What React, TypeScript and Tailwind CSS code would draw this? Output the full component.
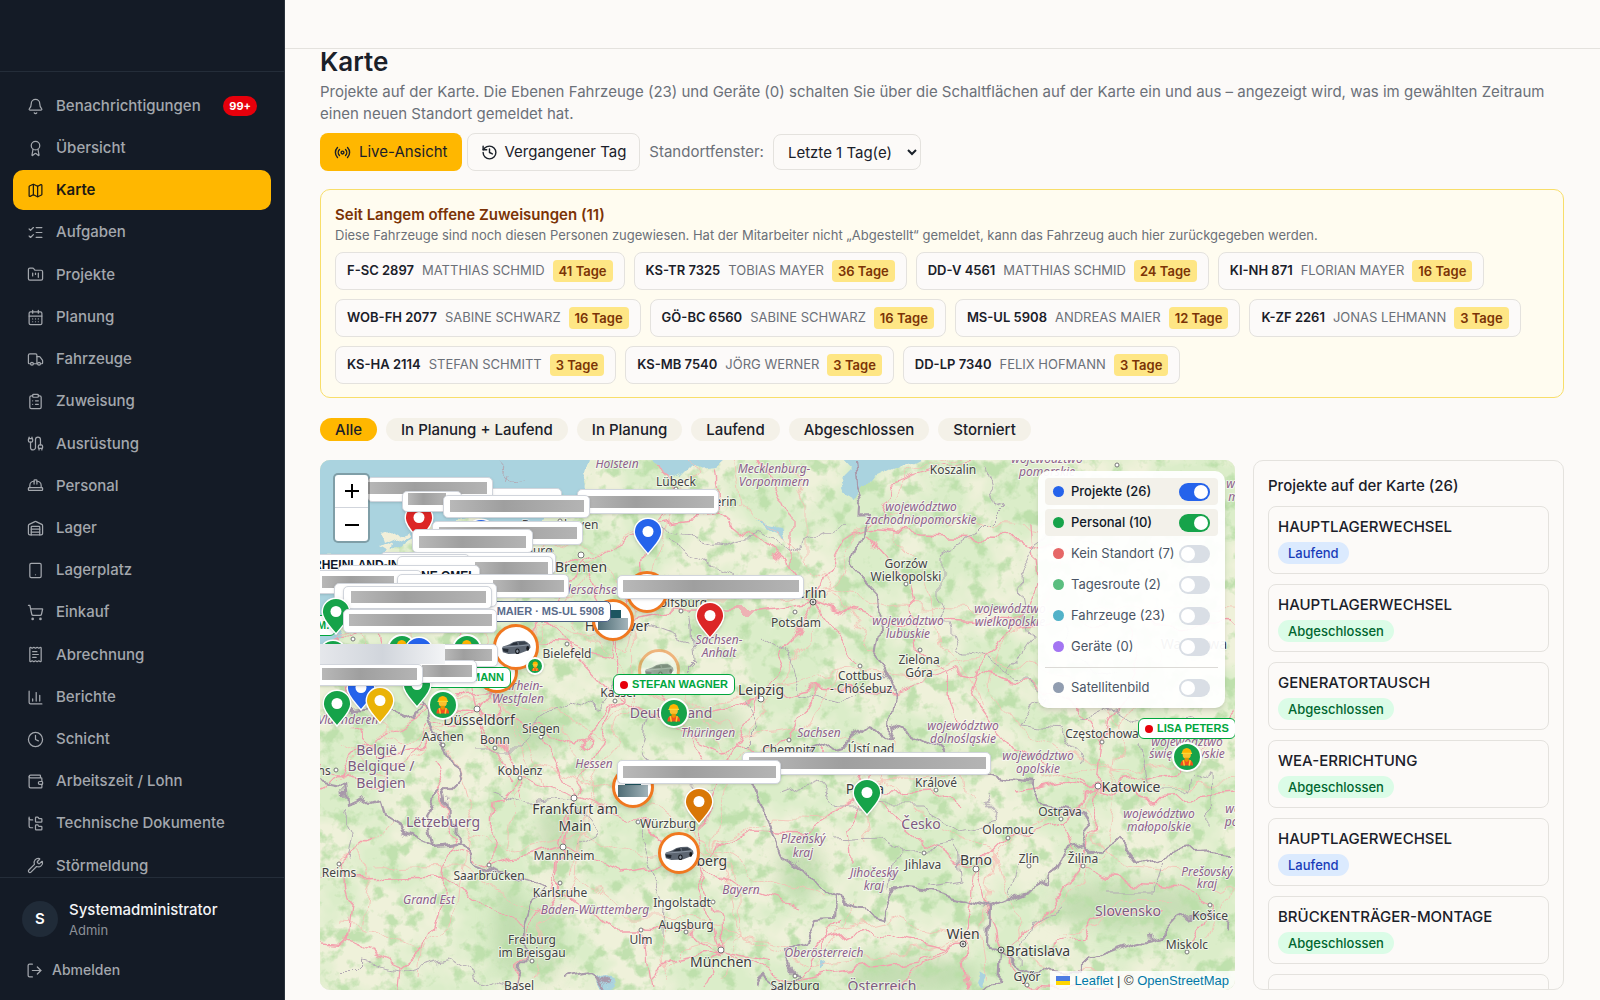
import React from 'react';
import {
    Award,
    Bell,
    Cable,
    CalendarDays,
    ChartColumn,
    ClipboardList,
    Clock,
    FolderKanban,
    FolderTree,
    HardHat,
    History,
    ListChecks,
    LogOut,
    Map as MapIcon,
    Radio,
    ReceiptText,
    ShoppingCart,
    Tablet,
    Truck,
    Wallet,
    Warehouse,
    Wrench,
} from 'lucide-react';

const navItems = [
    { label: 'Benachrichtigungen', icon: Bell, badge: '99+' },
    { label: 'Übersicht', icon: Award },
    { label: 'Karte', icon: MapIcon },
    { label: 'Aufgaben', icon: ListChecks },
    { label: 'Projekte', icon: FolderKanban },
    { label: 'Planung', icon: CalendarDays },
    { label: 'Fahrzeuge', icon: Truck },
    { label: 'Zuweisung', icon: ClipboardList },
    { label: 'Ausrüstung', icon: Cable },
    { label: 'Personal', icon: HardHat },
    { label: 'Lager', icon: Warehouse },
    { label: 'Lagerplatz', icon: Tablet },
    { label: 'Einkauf', icon: ShoppingCart },
    { label: 'Abrechnung', icon: ReceiptText },
    { label: 'Berichte', icon: ChartColumn },
    { label: 'Schicht', icon: Clock },
    { label: 'Arbeitszeit / Lohn', icon: Wallet },
    { label: 'Technische Dokumente', icon: FolderTree },
    { label: 'Störmeldung', icon: Wrench },
];

const assignments = [
    { plate: 'F-SC 2897', name: 'MATTHIAS SCHMID', days: 41 },
    { plate: 'KS-TR 7325', name: 'TOBIAS MAYER', days: 36 },
    { plate: 'DD-V 4561', name: 'MATTHIAS SCHMID', days: 24 },
    { plate: 'KI-NH 871', name: 'FLORIAN MAYER', days: 16 },
    { plate: 'WOB-FH 2077', name: 'SABINE SCHWARZ', days: 16 },
    { plate: 'GÖ-BC 6560', name: 'SABINE SCHWARZ', days: 16 },
    { plate: 'MS-UL 5908', name: 'ANDREAS MAIER', days: 12 },
    { plate: 'K-ZF 2261', name: 'JONAS LEHMANN', days: 3 },
    { plate: 'KS-HA 2114', name: 'STEFAN SCHMITT', days: 3 },
    { plate: 'KS-MB 7540', name: 'JÖRG WERNER', days: 3 },
    { plate: 'DD-LP 7340', name: 'FELIX HOFMANN', days: 3 },
];

const filters = ['Alle', 'In Planung + Laufend', 'In Planung', 'Laufend', 'Abgeschlossen', 'Storniert'];

const projects = [
    { title: 'HAUPTLAGERWECHSEL', status: 'Laufend' },
    { title: 'HAUPTLAGERWECHSEL', status: 'Abgeschlossen' },
    { title: 'GENERATORTAUSCH', status: 'Abgeschlossen' },
    { title: 'WEA-ERRICHTUNG', status: 'Abgeschlossen' },
    { title: 'HAUPTLAGERWECHSEL', status: 'Laufend' },
    { title: 'BRÜCKENTRÄGER-MONTAGE', status: 'Abgeschlossen' },
    { title: 'ROTORBLATTTAUSCH', status: 'Laufend' },
];

const layers = [
    { id: 'projekte', label: 'Projekte (26)', dot: 'bg-[#2563eb]', track: 'peer-checked:bg-[#2563eb]' },
    { id: 'personal', label: 'Personal (10)', dot: 'bg-[#16a34a]', track: 'peer-checked:bg-[#16a34a]' },
    { id: 'ohne', label: 'Kein Standort (7)', dot: 'bg-[#dc2626]', track: 'peer-checked:bg-[#dc2626]' },
    { id: 'route', label: 'Tagesroute (2)', dot: 'bg-[#16a34a]', track: 'peer-checked:bg-[#16a34a]' },
    { id: 'fahrzeuge', label: 'Fahrzeuge (23)', dot: 'bg-[#0891b2]', track: 'peer-checked:bg-[#0891b2]' },
    { id: 'geraete', label: 'Geräte (0)', dot: 'bg-[#7c3aed]', track: 'peer-checked:bg-[#7c3aed]' },
];

// [text, x, y] – y is the vertical middle of the line
type Place = [string, number, number];

const cities: Place[] = [
    ['Lübeck', 356, 21], ['Schwerin', 391, 41], ['Koszalin', 633, 9], ['Bremerhaven', 240, 64],
    ['Gorzów', 586, 103], ['Wielkopolski', 586, 116], ['Potsdam', 476, 162], ['Wolfsburg', 358, 142],
    ['Oldenburg', 202, 90], ['Bielefeld', 247, 193], ['Kassel', 298, 232], ['Zielona', 599, 199], ['Góra', 599, 212],
    ['Cottbus', 540, 215], ['- Chóśebuz', 541, 228], ['Siegen', 221, 268], ['Aachen', 123, 276],
    ['Bonn', 175, 279], ['Koblenz', 200, 310], ['Chemnitz', 469, 289], ['Ústí nad', 551, 288],
    ['Częstochowa', 782, 273], ['Králové', 616, 322], ['Ostrava', 740, 351], ['Olomouc', 688, 369],
    ['Jihlava', 603, 404], ['Zlín', 709, 398], ['Žilina', 763, 398], ['Košice', 890, 455],
    ['Miskolc', 867, 484], ['Győr', 707, 516], ['Salzburg', 475, 525], ['Würzburg', 348, 363],
    ['Mannheim', 244, 395], ['Saarbrücken', 169, 415], ['Karlsruhe', 240, 432], ['Reims', 19, 412],
    ['Ingolstadt', 362, 442], ['Augsburg', 366, 464], ['Ulm', 321, 479], ['Freiburg', 212, 479],
    ['im Breisgau', 212, 492], ['Basel', 199, 525], ['Mons', -5, 310],
];

const bigCities: Place[] = [
    ['Bremen', 261, 106], ['Hannover', 297, 165], ['Berlin', 487, 132], ['Leipzig', 441, 229],
    ['Düsseldorf', 159, 259], ['Frankfurt am', 255, 348], ['Main', 255, 365], ['Praha', 545, 328],
    ['Katowice', 811, 326], ['Brno', 656, 399], ['Wien', 643, 473], ['Bratislava', 718, 490],
    ['München', 401, 501], ['Nürnberg', 375, 400], ['Warszawa', 874, 183],
];

const countries: Place[] = [
    ['Deutschland', 351, 252], ['België /', 61, 289], ['Belgique /', 61, 305], ['Belgien', 61, 322],
    ['Lëtzebuerg', 123, 361], ['Česko', 601, 363], ['Slovensko', 808, 450], ['Österreich', 562, 525],
];

const regions: Place[] = [
    ['Holstein', 297, 3], ['Mecklenburg-', 454, 8], ['Vorpommern', 454, 21], ['województwo', 601, 46],
    ['zachodniopomorskie', 601, 59], ['Niedersachsen', 265, 129], ['Sachsen-', 399, 179], ['Anhalt', 399, 192],
    ['województwo', 588, 160], ['lubuskie', 588, 173], ['województwo', 690, 148], ['wielkopolskie', 690, 161],
    ['Thüringen', 388, 272], ['Sachsen', 499, 272], ['województwo', 643, 265], ['dolnośląskie', 643, 278],
    ['województwo', 718, 295], ['opolskie', 718, 308], ['województwo', 867, 281], ['świętokrzyskie', 867, 293],
    ['województwo', 839, 353], ['małopolskie', 839, 366], ['województwo', 941, 348], ['podkarpackie', 941, 361],
    ['Plzeňský', 483, 378], ['kraj', 483, 392], ['Jihočeský', 554, 412], ['kraj', 554, 425],
    ['Prešovský', 887, 411], ['kraj', 887, 423], ['Oberösterreich', 504, 492], ['Hessen', 274, 303],
    ['Bayern', 421, 429], ['Baden-Württemberg', 275, 449], ['Grand Est', 109, 439], ['Vlaanderen', 28, 259],
    ['Nordrhein-', 194, 225], ['Westfalen', 198, 238], ['województwo', 727, -2], ['pomorskie', 727, 11],
    ['województwo', 942, 23], ['mazowieckie', 942, 36],
];

const towns = [
    [356, 29], [240, 61], [231, 91], [222, 160], [247, 184], [221, 277], [175, 288], [123, 285],
    [200, 318], [318, 362], [169, 405], [240, 423], [19, 404], [393, 442], [366, 472],
    [321, 470], [212, 501], [361, 151], [475, 152], [295, 241], [469, 280], [586, 124],
    [600, 190], [540, 206], [741, 359], [688, 378], [604, 393], [709, 406], [763, 406],
    [782, 282], [616, 330], [890, 445], [867, 492], [707, 525], [475, 516], [33, 179], [797, 5], [16, 310],
];

const bigTowns = [[261, 95], [157, 249], [254, 338], [243, 387], [401, 490], [441, 239], [778, 326], [656, 409]];

const capitals = [[493, 142], [643, 484], [681, 490]];

const roads = [
    'M0 330 L40 290 L110 250 L157 252 L222 160 L261 104 L330 66 L400 55 L470 110 L493 142',
    'M261 104 L297 165 L360 150 L440 150 L493 142 L560 160 L700 165 L800 160 L915 165',
    'M297 165 L298 240 L254 338 L243 390 L240 430 L205 480 L195 530',
    'M157 252 L200 318 L254 338 L318 362 L375 400 L401 490 L475 520 L520 460',
    'M375 400 L395 320 L441 239 L493 142 L520 80 L545 70 L600 75 L700 78 L780 100',
    'M545 70 L570 25 L633 5 L680 -5',
    'M441 239 L500 225 L575 230 L640 210 L700 222 L760 245 L782 282 L778 326 L741 359 L688 378 L656 409 L643 484 L600 500 L475 520',
    'M540 206 L493 142 M500 225 L469 280 L400 290 L298 240 L222 160',
    'M551 288 L545 333 L600 380 L656 409 L681 490 L707 525 L800 530',
    'M545 333 L616 330 L640 350 M545 333 L483 372 L432 370 L375 400',
    'M545 333 L527 370 L530 400 M545 333 L520 300 L500 290',
    'M778 326 L830 340 L915 335 M778 326 L770 380 L763 406 L790 420 L860 428 L890 445 L867 492',
    'M763 406 L725 455 L690 485 M725 490 L760 478 L780 455 L840 450',
    'M375 400 L318 362 M243 387 L300 410 L375 400 L421 429 L480 450',
    'M321 470 L366 472 L401 490 L450 500 M240 430 L290 470 L321 470 L330 530',
    'M-5 415 L19 404 L50 380 M19 404 L30 440 L25 480 L80 505 L110 480 L120 450 L128 390 L169 405 L243 387',
    'M30 420 L125 418 L180 455 L205 470 M80 505 L78 530 M25 480 L0 478',
    'M157 252 L110 270 L90 300 L50 330 L0 300 M110 300 L135 375 L128 392',
    'M200 318 L175 345 L169 405 M222 277 L254 338 M157 252 L221 268 L260 290 L298 240',
    'M330 66 L320 110 L297 165 M356 29 L330 66 M400 55 L393 10 M441 0 L470 60 L470 110',
    'M356 29 L340 0 M261 104 L222 95 L160 110 L120 140 L60 160 L20 180 L0 190',
    'M60 160 L70 200 L110 250 M20 180 L30 250 M140 170 L157 252',
    'M700 165 L720 120 L715 60 M700 165 L660 200 L650 240 L690 290 L778 326',
    'M800 160 L820 210 L782 282 M915 250 L860 310 L778 326',
    'M586 124 L545 78 M586 124 L600 190 L630 225 L640 260',
    'M643 484 L625 490 L580 480 L550 470 L490 485 M643 484 L600 505 L570 530 M643 484 L650 530',
    'M741 359 L763 406 M778 326 L740 320 L700 330 M297 165 L290 200 L247 184 L200 180 L157 252',
    'M401 490 L380 530 M401 490 L400 455 L375 400 M401 490 L350 500 L330 520',
    'M243 390 L235 430 M250 345 L240 385 M158 245 L170 285 L190 320 M140 235 L175 232 L180 258',
    'M205 340 L200 318 M340 230 L395 320 M298 240 L350 262 L441 239 M30 270 L60 295 L110 285',
];

const borders = [
    'M535 0 L537 25 L545 48 L543 78 L532 108 L557 135 L560 172 L555 198 L575 228 L570 277 L543 265 L523 282 L497 290 L460 305 L432 322 L445 357 L462 393 L480 407 L503 433 L530 447 L560 455 L573 427 L603 430 L647 440 L670 447 L693 437 L730 422 L743 390 L768 383 L777 392 L800 378 L820 403 L840 395 L890 390 L915 392',
    'M570 277 L575 268 L615 288 L640 310 L673 317 L710 323 L720 343 L758 350 L768 383',
    'M503 433 L514 440 L513 457 L497 458 L483 480 L462 490 L475 515 L460 530',
    'M670 447 L668 480 L680 493 L678 523 L655 530 M680 493 L710 510 L765 515 L765 498 L793 487 L813 480 L843 473 L857 458 L873 453 L903 460 L915 473',
    'M100 180 L92 215 L108 240 L112 267 L128 290 L138 317 L125 330 L128 350 L140 365 L138 383 L112 387 L108 357 L122 333',
    'M0 318 L25 323 L27 347 L58 337 L62 360 L82 373 L112 387 L138 385 L155 403 L202 420 L228 427 L212 453 L205 473 L202 507 L195 530',
    'M20 250 L60 245 L90 260 L108 240',
    'M245 520 L270 515 L290 528 M432 530 L440 515 L460 530',
];

const stateBorders = [
    'M180 0 L196 20 L206 18 M190 8 L188 18',
    'M340 70 L370 75 L400 85 L440 75 L470 90 L500 75 L530 60 M350 80 L380 100 L410 112 L440 125',
    'M370 150 L375 200 L340 235 M440 180 L470 200 L480 232 L520 240 L545 225 M420 290 L440 270 L430 240',
    'M330 165 L370 180 M330 250 L320 290 L340 320 L395 330 M158 290 L200 290 L220 260 L250 240 L280 250 L298 225',
    'M175 330 L215 345 L250 340 L280 375 L260 385 M318 368 L330 400 L342 450 L340 475',
    'M667 10 L680 50 L660 70 L620 95 L620 140 L640 190 L690 210 L710 180 L700 120 L720 80 L750 60',
    'M690 210 L720 235 L700 265 L740 270 L760 300 M760 260 L800 250 L830 270 L870 260 L915 280',
    'M820 280 L830 330 L860 330 L890 310 L892 370 M745 170 L760 200 L800 215',
    'M460 335 L500 320 L520 345 L600 345 L640 370 M512 382 L560 380 L580 390 L570 425 M580 390 L640 385 L645 420 L610 425',
    'M640 370 L680 360 L665 330 M700 400 L690 435 M790 430 L830 430 L840 400 M700 500 L710 465 L740 450',
    'M20 520 L40 500 L90 510 L130 500 L160 520 L200 530 M30 400 L35 370 L25 350',
];

type Box = { x: number; y: number; w: number; h: number; text?: string; pad?: number; bar?: [number, number, number] };

// name plates whose text is masked, bar = [x, y, width]
const maskedLabels: Box[] = [
    { x: 125, y: 28, w: 117, h: 20 },
    { x: 47, y: 17, w: 126, h: 25, bar: [47, 22, 120] },
    { x: 82, y: 31, w: 60, h: 21, bar: [88, 33, 38] },
    { x: 257, y: 29, w: 142, h: 25, bar: [263, 36, 131] },
    { x: 123, y: 35, w: 147, h: 23, bar: [130, 40, 134] },
    { x: 112, y: 61, w: 151, h: 24, bar: [119, 67, 138] },
    { x: 92, y: 69, w: 121, h: 24, bar: [99, 76, 107] },
    { x: 60, y: 92, w: 176, h: 22 },
    { x: -30, y: 94, w: 180, h: 24, text: 'RHEINLAND-IN', pad: 22 },
    { x: 77, y: 96, w: 156, h: 24, bar: [155, 102, 73] },
    { x: 18, y: 105, w: 142, h: 24, text: 'NE OMEI', pad: 82 },
    { x: -10, y: 110, w: 112, h: 24, bar: [2, 116, 72] },
    { x: 77, y: 114, w: 172, h: 24, bar: [173, 120, 71] },
    { x: 14, y: 123, w: 163, h: 24 },
    { x: 23, y: 126, w: 149, h: 23, bar: [31, 131, 135] },
    { x: 297, y: 115, w: 187, h: 24, bar: [303, 120, 176] },
    { x: 422, y: 292, w: 249, h: 23, bar: [429, 297, 237] },
    { x: 297, y: 300, w: 164, h: 24, bar: [303, 306, 153] },
];

const frontLabels: Box[] = [
    { x: 23, y: 149, w: 154, h: 24, bar: [29, 154, 143] },
    { x: -10, y: 184, w: 188, h: 23, bar: [125, 189, 47] },
    { x: -10, y: 200, w: 167, h: 23, bar: [102, 205, 50] },
    { x: -10, y: 204, w: 113, h: 22, bar: [2, 208, 95] },
];

const pins = [
    { x: 99, y: 58, color: '#dc2626' },
    { x: 161, y: 73, color: '#2563eb' },
    { x: 16, y: 152, color: '#16a34a' },
    { x: 13, y: 194, color: '#16a34a' },
    { x: 99, y: 191, color: '#2563eb' },
    { x: 41, y: 228, color: '#2563eb' },
    { x: 60, y: 241, color: '#eab308' },
    { x: 17, y: 244, color: '#16a34a' },
    { x: 97, y: 225, color: '#16a34a' },
    { x: 328, y: 72, color: '#2563eb' },
    { x: 390, y: 156, color: '#dc2626' },
    { x: 379, y: 342, color: '#d97706' },
    { x: 547, y: 333, color: '#16a34a' },
];

const vehicles = [
    { x: 327, y: 132, size: 42, kind: 'van' },
    { x: 293, y: 160, size: 42, kind: 'masked' },
    { x: 177, y: 212, size: 42, kind: 'van' },
    { x: 196, y: 187, size: 46, kind: 'car' },
    { x: 339, y: 210, size: 42, kind: 'car', faded: true },
    { x: 313, y: 327, size: 42, kind: 'masked' },
    { x: 359, y: 393, size: 42, kind: 'car' },
];

const people = [
    { x: 82, y: 189, size: 30 },
    { x: 147, y: 189, size: 30 },
    { x: 123, y: 245, size: 30 },
    { x: 215, y: 206, size: 18 },
    { x: 354, y: 253, size: 30 },
    { x: 867, y: 297, size: 30 },
];

const PlaceNames = ({ places, className }: { places: Place[]; className: string }) => (
    <g className={className} textAnchor="middle" dominantBaseline="central" paintOrder="stroke" strokeLinejoin="round">
        {places.map(([text, x, y]) => (
            <text key={`${text}-${x}-${y}`} x={x} y={y}>{text}</text>
        ))}
    </g>
);

const BaseMap = () => (
    <svg className="absolute inset-0 h-full w-full" viewBox="0 0 915 530" preserveAspectRatio="xMidYMid slice" aria-hidden="true">
        <defs>
            <filter id="forest" x="0" y="0" width="100%" height="100%" colorInterpolationFilters="sRGB">
                <feTurbulence type="fractalNoise" baseFrequency="0.06" numOctaves="4" seed="8" />
                <feColorMatrix values="0 0 0 0 0.73  0 0 0 0 0.87  0 0 0 0 0.66  5 0 0 0 -2.55" />
            </filter>
            <filter id="meadow" x="0" y="0" width="100%" height="100%" colorInterpolationFilters="sRGB">
                <feTurbulence type="fractalNoise" baseFrequency="0.014" numOctaves="4" seed="21" />
                <feColorMatrix values="0 0 0 0 0.86  0 0 0 0 0.93  0 0 0 0 0.79  5 0 0 0 -2" />
            </filter>
            <filter id="wiggle" x="-2%" y="-2%" width="104%" height="104%" colorInterpolationFilters="sRGB">
                <feTurbulence type="fractalNoise" baseFrequency="0.04" numOctaves="2" seed="3" />
                <feDisplacementMap in="SourceGraphic" scale="24" xChannelSelector="R" yChannelSelector="G" />
            </filter>
            <filter id="soft"><feGaussianBlur stdDeviation="9" /></filter>
        </defs>
        <rect width="915" height="530" fill="#eff1da" />
        <rect width="915" height="530" filter="url(#meadow)" />
        <g fill="#add19e" opacity="0.6" filter="url(#soft)">
            <ellipse cx="190" cy="470" rx="16" ry="45" />
            <ellipse cx="225" cy="480" rx="14" ry="40" />
            <ellipse cx="590" cy="515" rx="70" ry="18" />
            <ellipse cx="810" cy="445" rx="80" ry="24" />
            <ellipse cx="480" cy="410" rx="22" ry="30" />
            <ellipse cx="380" cy="262" rx="45" ry="16" />
            <ellipse cx="210" cy="270" rx="35" ry="22" />
            <ellipse cx="240" cy="375" rx="22" ry="30" />
        </g>
        <rect width="915" height="530" opacity="0.85" filter="url(#forest)" />
        <g filter="url(#wiggle)">
            <g fill="#aad3df">
                <path d="M-20 -20 L272 -20 L264 15 L270 30 L244 38 L236 50 L200 62 L150 60 L110 66 L85 78 L60 100 L-20 104 Z" />
                <path d="M-10 128 L20 132 L30 150 L22 180 L8 190 L-10 186 Z" />
                <path d="M335 -10 L415 -10 L395 8 L372 10 L362 20 L348 14 Z" />
                <path d="M512 -12 L625 -12 L590 6 L556 22 L542 24 L536 40 L526 34 L520 18 L530 8 Z" />
                <path d="M440 62 L460 66 L464 76 L454 72 Z M455 50 L460 58 M660 505 L668 510 L662 525 L656 518 Z M500 500 L506 504 L500 512 Z" />
                <path d="M270 514 L302 530 L286 530 Z" />
            </g>
            <g fill="#f2efd9">
                <path d="M62 78 L85 70 L88 73 L64 84 Z M60 88 L72 82 L70 94 Z" />
            </g>
            <g fill="none" stroke="#f7bdb4" strokeWidth="1" opacity="0.8" transform="translate(19 -13)">
                {roads.map((d) => <path key={d} d={d} />)}
            </g>
            <g fill="none" stroke="#f4a0ad" strokeWidth="1.3" strokeLinejoin="round">
                {roads.map((d) => <path key={d} d={d} />)}
            </g>
            <g fill="none" stroke="#b3a9b4" strokeWidth="1">
                {stateBorders.map((d) => <path key={d} d={d} />)}
            </g>
            <g fill="none" stroke="#a899aa" strokeWidth="2.200" strokeLinejoin="round">
                {borders.map((d) => <path key={d} d={d} />)}
            </g>
        </g>
        <g fill="#fff" stroke="#777" strokeWidth="1">
            {towns.map(([x, y]) => <circle key={`${x}-${y}`} cx={x} cy={y} r="2" />)}
            {bigTowns.map(([x, y]) => <circle key={`${x}-${y}`} cx={x} cy={y} r="3" />)}
        </g>
        <g fill="#555">
            {capitals.map(([x, y]) => (
                <g key={`${x}-${y}`}>
                    <circle cx={x} cy={y} r="3" fill="#ddd" stroke="#555" />
                    <circle cx={x} cy={y} r="1" />
                </g>
            ))}
        </g>
        <PlaceNames places={regions} className="fill-[#8d618b] stroke-white/60 stroke-2 font-['Noto_Sans',sans-serif] text-[12px] italic" />
        <PlaceNames places={cities} className="fill-[#444444] stroke-white/60 stroke-2 font-['Noto_Sans',sans-serif] text-[12px]" />
        <PlaceNames places={bigCities} className="fill-[#3c3c3c] stroke-white/60 stroke-2 font-['Noto_Sans',sans-serif] text-[14px]" />
        <PlaceNames places={countries} className="fill-[#7d5a80] stroke-white/60 stroke-2 font-['Noto_Sans',sans-serif] text-[14px]" />
    </svg>
);

const Worker = () => (
    <svg viewBox="0 0 20 20" className="h-3/4 w-3/4">
        <path d="M3.500 19c0-4 2-6.500 6.500-6.500s6.500 2.500 6.500 6.500z" fill="#f4511e" />
        <path d="M6.500 13.500 L7.500 19 M13.500 13.500 L12.500 19" stroke="#ffca28" strokeWidth="1.500" />
        <circle cx="10" cy="8" r="4.200" fill="#fbc02d" />
        <path d="M8 11h4v3l-2 1.500-2-1.500z" fill="#e59600" />
        <path d="M5 6.500a5 5.500 0 0 1 10 0z" fill="#ffb300" />
        <rect x="4.500" y="6" width="11" height="1.200" rx=".6" fill="#fdd835" />
    </svg>
);

const Car = () => (
    <svg viewBox="0 0 32 16" className="w-[30px]">
        <path d="M1 9 L2 7 Q7 5.500 9 4.500 Q13 1.500 18 1 L25 .8 Q28 2 31 5 L31.500 8 L29 11 L20 14.500 L8 15 L2 13 Z" fill="#5c6571" />
        <path d="M9.500 5.500 Q13 2.600 17 2.200 L18 5.400 Z" fill="#2a313b" />
        <path d="M19 2 L25 1.800 L28.500 4.200 L19.500 5.300 Z" fill="#39424d" />
        <path d="M2 7.600 L16 6.600 L30 5.200" stroke="#9aa4b1" strokeWidth=".8" fill="none" />
        <path d="M2 9 L8 9.600 L7.500 13 L2.500 12 Z" fill="#232a33" />
        <ellipse cx="17.500" cy="12" rx="2.300" ry="3" fill="#15181d" />
        <ellipse cx="17.500" cy="12" rx="1.200" ry="1.800" fill="#8a94a1" />
        <ellipse cx="28.500" cy="9" rx="1.500" ry="2.500" fill="#15181d" />
    </svg>
);

const MaskedLabel = ({ box }: { box: Box }) => (
    <>
        <div
            className="absolute overflow-hidden rounded-[5px] border border-gray-300 bg-white font-['Liberation_Sans',Arial,sans-serif] text-[12px] leading-[20px] font-bold whitespace-nowrap text-gray-900 shadow"
            style={{ left: box.x, top: box.y, width: box.w, height: box.h, paddingLeft: box.pad }}
        >
            {box.text}
        </div>
        {box.bar && (
            <div
                className="absolute h-3 bg-linear-to-r from-[#b8b8b8] via-[#9f9f9f] via-40% to-[#b4b4b4]"
                style={{ left: box.bar[0], top: box.bar[1], width: box.bar[2] }}
            />
        )}
    </>
);

const Markers = () => (
    <div>
        {pins.slice(0, 2).map((pin) => <Pin key={`${pin.x}-${pin.y}`} {...pin} />)}
        {vehicles.map((v) => (
            <div
                key={`${v.x}-${v.y}`}
                className={`absolute flex -translate-x-1/2 -translate-y-1/2 items-center justify-center overflow-hidden rounded-full border-[3px] border-[#f07820] bg-white shadow-md ${v.faded ? 'opacity-50' : ''}`}
                style={{ left: v.x, top: v.y, width: v.size, height: v.size }}
            >
                {v.kind === 'car' && <Car />}
                {v.kind === 'masked' && (
                    <div className="flex w-[30px] flex-col items-center">
                        <div className="h-2 w-4 bg-[#1d5560]" />
                        <div className="h-3 w-full bg-linear-to-r from-[#4f6d76] to-[#a3b4ba]" />
                    </div>
                )}
            </div>
        ))}
        <div className="absolute top-[141px] left-[110px] flex h-[21px] w-[181px] items-center justify-end rounded-[5px] border border-[#4d6288] bg-white px-1.5 font-['Liberation_Sans',Arial,sans-serif] text-[11px] font-bold whitespace-nowrap text-[#5a6b8a]">
            MAIER · MS-UL 5908
        </div>
        {maskedLabels.map((box) => <MaskedLabel key={`${box.x}-${box.y}`} box={box} />)}
        <NameTag x={-10} y={155} text="M." />
        {people.slice(0, 2).map((p) => <Person key={`${p.x}-${p.y}`} {...p} />)}
        <NameTag x={89} y={207} text="HOFMANN" wide />
        {pins.slice(2).map((pin) => <Pin key={`${pin.x}-${pin.y}`} {...pin} />)}
        {people.slice(2).map((p) => <Person key={`${p.x}-${p.y}`} {...p} />)}
        {frontLabels.map((box) => <MaskedLabel key={`${box.x}-${box.y}`} box={box} />)}
        <div className="absolute top-[184px] left-0 h-5 w-[125px] bg-linear-to-r from-gray-200 via-gray-300 to-gray-100" />
        <NameTag x={293} y={214} text="STEFAN WAGNER" dot />
        <NameTag x={818} y={258} text="LISA PETERS" dot />
    </div>
);

const NameTag = ({ x, y, text, dot, wide }: { x: number; y: number; text: string; dot?: boolean; wide?: boolean }) => (
    <div
        className={`absolute flex h-[21px] items-center justify-end gap-1 rounded-[6px] border border-green-600 bg-white px-1.5 font-['Liberation_Sans',Arial,sans-serif] text-[11px] font-bold whitespace-nowrap text-green-600 ${wide ? 'w-[102px]' : ''}`}
        style={{ left: x, top: y }}
    >
        {dot && <span className="size-2 rounded-full bg-red-600" />}
        {text}
    </div>
);

const Pin = ({ x, y, color }: { x: number; y: number; color: string }) => (
    <svg
        className="absolute h-[38px] w-[30px] drop-shadow"
        viewBox="0 0 30 38"
        style={{ left: x - 15, top: y - 15 }}
    >
        <path d="M15 1.200C7.300 1.200 1.200 7.300 1.200 15c0 7.800 8 14.500 13.800 22 5.800-7.500 13.800-14.200 13.800-22C28.800 7.300 22.700 1.200 15 1.200z" fill={color} stroke="#fff" strokeWidth="1.400" />
        <circle cx="15" cy="14.500" r="5.500" fill="#fff" />
    </svg>
);

const Person = ({ x, y, size }: { x: number; y: number; size: number }) => (
    <div
        className="absolute flex -translate-x-1/2 -translate-y-1/2 items-center justify-center rounded-full border-2 border-white bg-[#16a34a] shadow"
        style={{ left: x, top: y, width: size, height: size }}
    >
        <Worker />
    </div>
);

const LayerToggle = ({ id, label, dot, track, on }: { id: string; label: string; dot: string; track: string; on: boolean }) => (
    <label
        htmlFor={id}
        className={`flex h-[27px] cursor-pointer items-center rounded px-[8px] text-[13px] ${on ? 'bg-[#f3f1ea] font-medium text-gray-900' : 'text-gray-600'}`}
    >
        <span className={`size-[11px] rounded-full ${dot} ${on ? '' : 'opacity-70'}`} />
        <span className="ml-[7px] flex-1 whitespace-nowrap">{label}</span>
        <input id={id} type="checkbox" defaultChecked={on} className="peer sr-only" />
        <span className={`flex h-[18px] w-[31px] items-center justify-start rounded-full bg-[#d9dee5] px-0.5 peer-checked:justify-end ${track}`}>
            <span className="size-[14px] rounded-full bg-white" />
        </span>
    </label>
);

const Sidebar = () => (
    <aside className="flex w-[285px] shrink-0 flex-col border-r border-[#2a323c] bg-[#141b26] text-[#a3a7ad]">
        <div className="h-[72px] shrink-0 border-b border-[#242d39]" />
        <nav className="min-h-0 flex-1 overflow-hidden px-[13px] pt-[14px]">
            <ul className="flex h-[800px] flex-col justify-between">
                {navItems.map(({ label, icon: Icon, badge }) => (
                    <li key={label}>
                        <a
                            href="#"
                            className={`flex h-10 items-center gap-3 rounded-[10px] px-[14px] text-[15px] ${label === 'Karte' ? 'bg-[#ffb700] font-semibold text-[#1c1a14]' : 'font-medium'}`}
                        >
                            <Icon size={17} strokeWidth={1.75} />
                            <span className="flex-1 whitespace-nowrap">{label}</span>
                            {badge && (
                                <span className="flex h-5 items-center rounded-full bg-[#e7000b] px-[6px] text-[11px] font-bold text-white">{badge}</span>
                            )}
                        </a>
                    </li>
                ))}
            </ul>
        </nav>
        <div className="flex shrink-0 flex-col border-t border-[#242d39] px-[22px] pt-[21px] pb-[18px]">
            <div className="flex items-center gap-[11px]">
                <div className="flex size-9 items-center justify-center rounded-full bg-[#202b38] text-[15px] font-semibold text-white">S</div>
                <div className="flex flex-col">
                    <p className="text-[15px] leading-[22px] font-medium text-[#f3f4f6]">Systemadministrator</p>
                    <p className="text-[13px] leading-[18px] text-[#8b9097]">Admin</p>
                </div>
            </div>
            <button type="button" className="mt-[19px] flex h-6 items-center gap-[9px] pl-1 text-sm font-medium">
                <LogOut size={17} strokeWidth={1.75} />
                Abmelden
            </button>
        </div>
    </aside>
);

const App = () => {
    const [activeFilter, setActiveFilter] = React.useState('Alle');

    return (
        <div className="flex h-screen overflow-hidden bg-[#fcfaf8] font-[Inter,sans-serif] text-[#1a2029]">
            <Sidebar />

            <div className="flex min-w-0 flex-1 flex-col">
                <header className="h-[49px] shrink-0 border-b border-[#e4e2de]" />

                <main className="flex min-h-0 flex-1 flex-col overflow-hidden pr-9 pb-[10px] pl-[35px]">
                    <h1 className="text-[26px] leading-[26px] font-semibold">Karte</h1>
                    <p className="mt-[6px] text-[15px] leading-[22px] text-[#6b7078]">
                        Projekte auf der Karte. Die Ebenen Fahrzeuge (23) und Geräte (0) schalten Sie über die Schaltflächen auf der Karte ein und aus – angezeigt wird, was im gewählten Zeitraum einen neuen Standort gemeldet hat.
                    </p>

                    <div className="mt-[8px] flex items-center text-[15px]">
                        <button type="button" className="flex h-[38px] items-center gap-2 rounded-lg bg-[#ffb700] px-[14px]">
                            <Radio size={17} />
                            Live-Ansicht
                        </button>
                        <button type="button" className="ml-[5px] flex h-[38px] items-center gap-[7px] rounded-lg border border-[#e4e2de] px-[13px]">
                            <History size={17} />
                            Vergangener Tag
                        </button>
                        <label htmlFor="window" className="ml-[9px] text-[#6b7078]">Standortfenster:</label>
                        <select id="window" className="ml-[9px] h-9 w-[148px] rounded-lg border border-[#e4e2de] bg-transparent px-[10px]">
                            <option>Letzte 1 Tag(e)</option>
                        </select>
                    </div>

                    <section className="mt-[18px] rounded-[10px] border border-[#f8de6a] bg-[#fffcf0] px-[14px] pt-[14px] pb-[13px]">
                        <h2 className="text-[15px] leading-[22px] font-semibold text-[#7b3306]">Seit Langem offene Zuweisungen (11)</h2>
                        <p className="text-[13px] leading-[18px] text-[#6b7078]">
                            Diese Fahrzeuge sind noch diesen Personen zugewiesen. Hat der Mitarbeiter nicht „Abgestellt“ gemeldet, kann das Fahrzeug auch hier zurückgegeben werden.
                        </p>
                        <div className="mt-[8px] flex flex-wrap gap-[9px]">
                            {assignments.map((a) => (
                                <div key={a.plate} className="flex h-[38px] items-center gap-2 rounded-lg border border-[#e4e2de] bg-[#fcfaf9] px-[11px] text-[13px] whitespace-nowrap">
                                    <span className="font-semibold">{a.plate}</span>
                                    <span className="text-[#6b7078]">{a.name}</span>
                                    <span className="rounded bg-[#fee685] px-[6px] leading-[22px] font-semibold text-[#7b3306]">{a.days} Tage</span>
                                </div>
                            ))}
                        </div>
                    </section>

                    <div className="mt-[20px] flex gap-[9px]">
                        {filters.map((f) => (
                            <button
                                key={f}
                                type="button"
                                onClick={() => setActiveFilter(f)}
                                className={`h-[23px] rounded-full px-[15px] text-[15px] leading-[22px] font-medium ${activeFilter === f ? 'bg-[#ffb700]' : 'bg-[#f4f1e8]'}`}
                            >
                                {f}
                            </button>
                        ))}
                    </div>

                    <div className="mt-[19px] flex min-h-0 flex-1 gap-[18px]">
                        <div className="relative min-w-0 flex-1 overflow-hidden rounded-[10px] outline-1 -outline-offset-1 outline-[#e4e2de]">
                            <BaseMap />
                            <Markers />

                            <div className="absolute top-[13px] left-[13px] flex flex-col overflow-hidden rounded-[5px] border-2 border-black/25 bg-white bg-clip-padding text-black">
                                <button type="button" aria-label="Vergrößern" className="flex size-[33px] items-center justify-center border-b border-gray-300">
                                    <svg viewBox="0 0 14 14" className="size-[14px]"><path d="M7 0v14M0 7h14" stroke="currentColor" strokeWidth="2" /></svg>
                                </button>
                                <button type="button" aria-label="Verkleinern" className="flex size-[33px] items-center justify-center">
                                    <svg viewBox="0 0 14 14" className="size-[14px]"><path d="M0 7h14" stroke="currentColor" strokeWidth="2" /></svg>
                                </button>
                            </div>

                            <div className="absolute top-[11px] right-[10px] flex w-[187px] flex-col gap-1 rounded-[10px] bg-white/95 px-[7px] py-[7px] shadow-md">
                                {layers.map((l, i) => <LayerToggle key={l.id} {...l} on={i < 2} />)}
                                <hr className="mt-[3px] mb-[2px] border-[#dcdad6]" />
                                <LayerToggle id="satellit" label="Satellitenbild" dot="bg-slate-500" track="peer-checked:bg-slate-500" on={false} />
                            </div>

                            <div className="absolute right-0 bottom-0 flex items-center gap-1 bg-white/80 px-[6px] font-['Liberation_Sans',Arial,sans-serif] text-[13px] leading-[19px] text-[#333]">
                                <svg viewBox="0 0 14 9" className="h-[9px] w-[14px]">
                                    <path fill="#4C7BE1" d="M0 0h14v5H0z" />
                                    <path fill="#FFD500" d="M0 5h14v4H0z" />
                                </svg>
                                <span>
                                    <a href="#" className="text-[#0078a8]">Leaflet</a> | © <a href="#" className="text-[#0078a8]">OpenStreetMap</a>
                                </span>
                            </div>
                        </div>

                        <section className="w-[311px] shrink-0 overflow-hidden rounded-[10px] border border-[#e4e2de] px-[14px] pt-[14px]">
                            <h2 className="text-[15px] leading-[22px] font-medium">Projekte auf der Karte (26)</h2>
                            <ul className="mt-[9px] flex flex-col gap-[10px]">
                                {projects.map((p, i) => (
                                    <li key={i} className="flex flex-col items-start rounded-lg border border-[#e4e2de] px-[9px] pt-[8px] pb-[9px]">
                                        <p className="text-[15px] leading-[24px] font-medium">{p.title}</p>
                                        <span
                                            className={`mt-[3px] rounded-full px-[10px] text-[13px] leading-[22px] font-medium ${p.status === 'Laufend' ? 'bg-blue-100 text-blue-800' : 'bg-green-100 text-green-800'}`}
                                        >
                                            {p.status}
                                        </span>
                                    </li>
                                ))}
                            </ul>
                        </section>
                    </div>
                </main>
            </div>
        </div>
    );
};

export default App;
